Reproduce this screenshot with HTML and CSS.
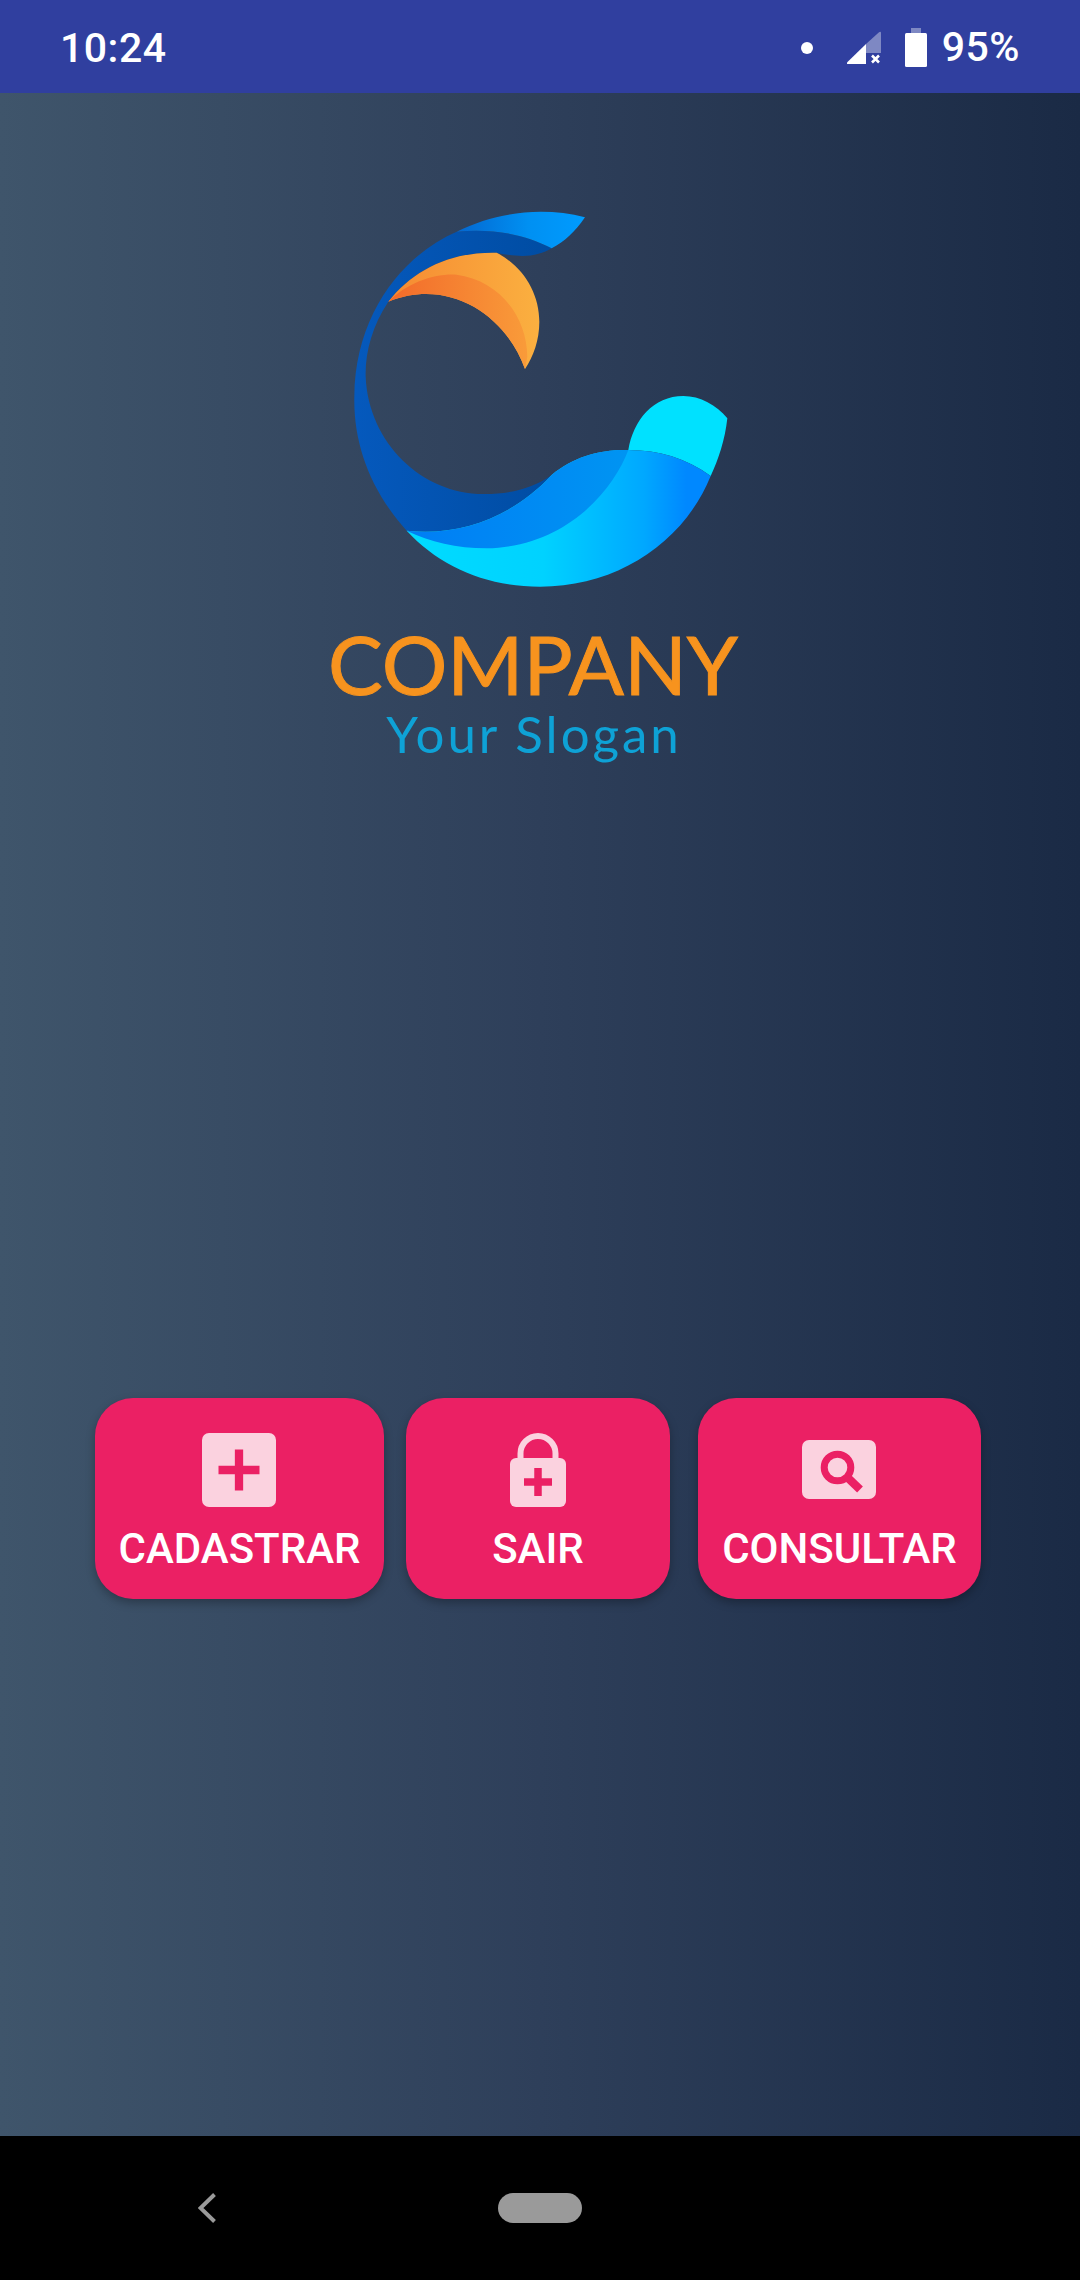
FILE: index.html
```html
<!DOCTYPE html>
<html lang="pt">
<head>
<meta charset="utf-8">
<title>Company</title>
<link rel="stylesheet" href="styles.css">
</head>
<body>
<div class="phone">
  <header class="status">
    <span class="clock">10:24</span>
    <div class="status-right">
      <span class="dot"></span>
      <svg class="signal" viewBox="0 0 34 33" aria-hidden="true">
        <path class="faint" d="M19 13 32 1.2Q34 0 34 2V22H19Z"/>
        <path class="solid" d="M1 33Q-1 33 .5 31L19 13V33Z"/>
        <path class="cross" d="M25 24.5l7 7M32 24.5l-7 7"/>
      </svg>
      <svg class="battery" viewBox="0 0 22 39" aria-hidden="true">
        <rect class="faint" x="6" y="0" width="10" height="6"/>
        <rect class="solid" x="0" y="5" width="22" height="34" rx="1.5"/>
      </svg>
      <span class="percent">95%</span>
    </div>
  </header>

  <main class="main">
    <svg class="logo" viewBox="0 0 1440 1260" aria-label="Logo">
      <defs>
        <linearGradient id="gTop" gradientUnits="userSpaceOnUse" x1="470" y1="0" x2="860" y2="0">
          <stop offset="0" stop-color="#0467d0"/><stop offset=".55" stop-color="#0090f2"/><stop offset="1" stop-color="#009cff"/>
        </linearGradient>
        <linearGradient id="gRing" gradientUnits="userSpaceOnUse" x1="160" y1="0" x2="760" y2="0">
          <stop offset="0" stop-color="#0559bd"/><stop offset="1" stop-color="#004ca2"/>
        </linearGradient>
        <linearGradient id="gOrangeL" gradientUnits="userSpaceOnUse" x1="265" y1="0" x2="720" y2="0">
          <stop offset="0" stop-color="#f58a32"/><stop offset="1" stop-color="#fbb040"/>
        </linearGradient>
        <linearGradient id="gOrangeD" gradientUnits="userSpaceOnUse" x1="265" y1="0" x2="690" y2="0">
          <stop offset="0" stop-color="#f26a2a"/><stop offset="1" stop-color="#f99c3a"/>
        </linearGradient>
        <linearGradient id="gWave" gradientUnits="userSpaceOnUse" x1="320" y1="0" x2="1232" y2="0">
          <stop offset="0" stop-color="#00dcff"/><stop offset=".45" stop-color="#00d2ff"/><stop offset=".78" stop-color="#00a8ff"/><stop offset=".92" stop-color="#0088ff"/>
        </linearGradient>
        <linearGradient id="gMid" gradientUnits="userSpaceOnUse" x1="320" y1="0" x2="985" y2="0">
          <stop offset="0" stop-color="#007ef5"/><stop offset="1" stop-color="#0094f2"/>
        </linearGradient>
      </defs>
      <path fill="url(#gRing)" d="M755 205C715 228 670 236 590 218C450 215 340 270 265 365C215 440 195 520 197 590C205 790 370 945 555 942C630 942 700 925 755 885C640 1010 480 1070 320 1052C210 930 160 790 163 650C165 400 310 225 470 155C570 145 670 160 755 205Z"/>
      <path fill="url(#gTop)" d="M470 155C590 95 730 80 855 112C825 155 795 185 755 205C670 160 570 145 470 155Z"/>
      <path fill="url(#gOrangeL)" d="M265 365C340 270 450 215 590 218C670 260 718 340 718 425C718 480 700 530 675 567C620 410 450 290 265 365Z"/>
      <path fill="url(#gOrangeD)" d="M265 365C320 310 400 280 470 284C590 300 680 400 682 530L675 567C620 410 450 290 265 365Z"/>
      <path fill="#00e1ff" d="M985 810C1000 720 1060 648 1150 648C1200 648 1250 675 1282 715C1275 780 1255 840 1232 888C1160 835 1075 810 985 810Z"/>
      <path fill="url(#gWave)" d="M320 1052C480 1070 640 1010 755 885C820 830 900 808 985 810C1075 810 1160 835 1232 888C1150 1090 950 1220 720 1220C560 1220 420 1160 320 1052Z"/>
      <path fill="url(#gMid)" d="M320 1052C480 1070 640 1010 755 885C820 830 900 808 985 810C940 930 800 1100 560 1105C470 1105 390 1085 320 1052Z"/>
    </svg>
    <div class="brand">COMPANY</div>
    <div class="slogan">Your Slogan</div>

    <div class="actions">
      <button class="action action-add">
        <svg class="icon" viewBox="0 0 74 74" aria-hidden="true">
          <rect class="icon-fill" width="74" height="74" rx="7"/>
          <path class="icon-mark" d="M16.500 37h41M37 16.500v41"/>
        </svg>
        <span>CADASTRAR</span>
      </button>
      <button class="action action-exit">
        <svg class="icon" viewBox="0 0 56 74" aria-hidden="true">
          <path class="icon-shackle" d="M10.500 27V20.500a17.500 17.500 0 0 1 35 0V27"/>
          <rect class="icon-fill" y="25" width="56" height="49" rx="6"/>
          <path class="icon-mark thin" d="M14 49h28M28 35v28"/>
        </svg>
        <span>SAIR</span>
      </button>
      <button class="action action-find">
        <svg class="icon" viewBox="0 0 74 74" aria-hidden="true">
          <rect class="icon-fill" y="7" width="74" height="59" rx="7"/>
          <circle class="icon-lens" cx="35.500" cy="34.500" r="13.300"/>
          <path class="icon-mark" d="M45 44 58 56.500"/>
        </svg>
        <span>CONSULTAR</span>
      </button>
    </div>
  </main>

  <nav class="navbar">
    <svg class="back" viewBox="0 0 18 30" aria-hidden="true"><path d="M16.500 1.500 2.500 15l14 13.500"/></svg>
    <span class="home"></span>
  </nav>
</div>
</body>
</html>
```

FILE: styles.css
```css
* { box-sizing: border-box; }
html, body { margin: 0; padding: 0; }
body { width: 1080px; height: 2280px; overflow: hidden; background: #000; font-family: Roboto, "Noto Sans", sans-serif; }

.phone { width: 1080px; height: 2280px; display: flex; flex-direction: column; }

.status { height: 93px; flex: none; background: #303f9f; color: #fff; display: flex; align-items: center; justify-content: space-between; padding: 4px 60px 0 60px; }
.clock, .percent { font-size: 41px; font-weight: 500; line-height: 1; letter-spacing: .5px; }
.status-right { display: flex; align-items: center; margin-top: -2px; }
.dot { width: 12px; height: 12px; border-radius: 50%; background: #fff; margin-right: 34px; }
.signal { width: 34px; height: 33px; margin-right: 24px; }
.battery { width: 22px; height: 39px; margin-right: 15px; margin-top: -1px; }
.solid { fill: #fff; }
.faint { fill: #fff; opacity: .38; }
.cross { stroke: #fff; stroke-width: 2.600; fill: none; }

.main { flex: 1; display: flex; flex-direction: column; align-items: center; padding-top: 87px; background: linear-gradient(90deg, #3f556b 0%, #2e3f5a 50%, #1a2a45 100%); }
.logo { width: 480px; height: 420px; display: block; flex: none; }
.brand { font-family: Lato, sans-serif; font-weight: 400; font-size: 82px; line-height: 60px; height: 60px; margin: 33px 14px 0 0; color: #f7931e; -webkit-text-stroke: 1px #f7931e; }
.slogan { font-family: Lato, sans-serif; font-weight: 400; font-size: 51px; line-height: 37px; height: 37px; margin: 22px 12px 0 0; color: #0ea2d6; letter-spacing: 3px; }

.actions { align-self: stretch; display: flex; padding-left: 95px; margin-top: 646px; }
.action { height: 201px; border: 0; border-radius: 38px; background: #eb2064; color: #fff; font-family: Roboto, sans-serif; font-size: 42px; font-weight: 500; display: flex; flex-direction: column; align-items: center; padding: 35px 0 0; box-shadow: 0 4px 10px rgba(0, 0, 0, .28); }
.action span { line-height: 48px; margin-top: 18px; }
.action-add { width: 289px; margin-right: 22px; }
.action-exit { width: 264px; margin-right: 28px; }
.action-find { width: 283px; }
.icon { height: 74px; display: block; margin-left: -1px; }
.action-add .icon, .action-find .icon { width: 74px; }
.action-exit .icon { width: 56px; }
.icon-fill { fill: #fbd2df; }
.icon-shackle { fill: none; stroke: #fbd2df; stroke-width: 6; }
.icon-mark { fill: none; stroke: #eb2064; stroke-width: 8.300; }
.icon-mark.thin { stroke-width: 7.500; }
.icon-lens { fill: none; stroke: #eb2064; stroke-width: 7; }

.navbar { height: 144px; flex: none; background: #000; display: flex; align-items: center; padding-left: 198px; }
.back { width: 18px; height: 30px; margin-right: 282px; }
.back path { fill: none; stroke: #9a9a9a; stroke-width: 4; }
.home { width: 84px; height: 30px; border-radius: 15px; background: #9a9a9a; }
```
